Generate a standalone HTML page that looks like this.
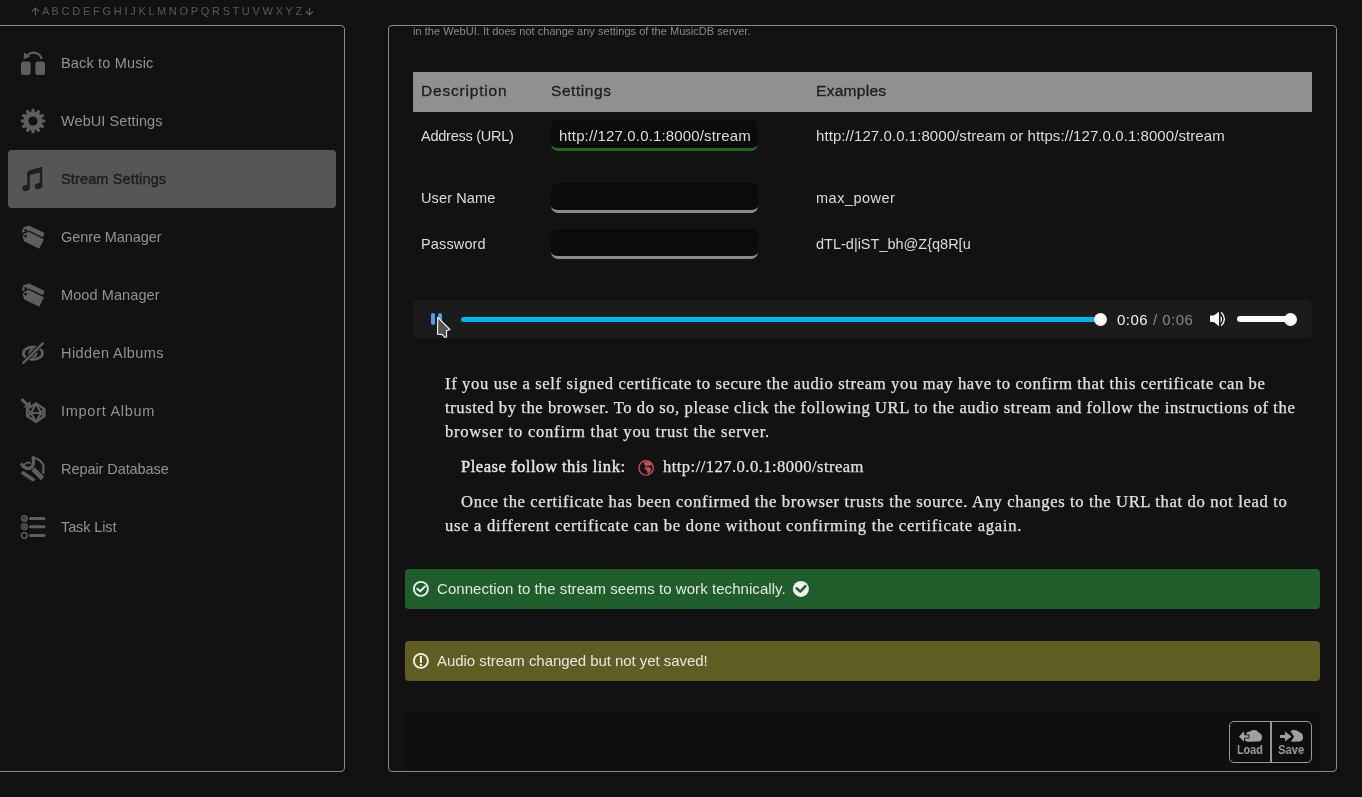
<!DOCTYPE html>
<html><head><meta charset="utf-8">
<style>
*{margin:0;padding:0;box-sizing:border-box}
html,body{width:1362px;height:797px;overflow:hidden;background:#121212;font-family:"Liberation Sans",sans-serif}
.abs{position:absolute}
.t{position:absolute;white-space:nowrap;line-height:1;will-change:transform}
#alpha{font-size:11px;color:#5a5a5a}
#side{left:-10px;top:25px;width:355px;height:747px;border:1px solid #8a8a8a;border-radius:4px}
.mi{position:absolute;left:60.8px;font-size:14.5px;color:#929292}
#sel{left:8px;top:150px;width:328px;height:58px;background:#565656;border-radius:4px}
.ic{position:absolute;fill:#606060}
#main{left:388px;top:25px;width:949px;height:747px;border:1px solid #8a8a8a;border-radius:4px}
#thead{left:413px;top:72px;width:899px;height:40px;background:#909090}
.th{position:absolute;font-size:15.5px;color:#1c1c1c;letter-spacing:0.8px;-webkit-text-stroke:0.3px #1c1c1c}
.td{position:absolute;font-size:14.5px;color:#dcdcdc}
.inp{position:absolute;left:551px;width:207px;height:30px;background:#0b0b0b;border-radius:7px;border-bottom:3px solid #8a8a8a}
#player{left:413px;top:300px;width:899px;height:38px;background:#1b1b1b;border-radius:5px}
.ser{position:absolute;font-family:"Liberation Serif",serif;font-size:16.6px;color:#e2e2e2;letter-spacing:0.55px;-webkit-text-stroke:0.25px #e2e2e2}
.msg{position:absolute;left:405px;width:915px;height:40px;border-radius:4px}
.mt{position:absolute;left:437px;font-size:15px;color:#e6e6e6}
</style></head><body>
<div class="t" id="alpha" style="left:42px;top:6px;letter-spacing:-0.16px">A B C D E F G H I J K L M N O P Q R S T U V W X Y Z</div>
<svg class="abs" style="left:31px;top:7px" width="9" height="9" viewBox="0 0 9 9"><path d="M4.5 8.5 L4.5 1 M1 4.5 L4.5 1 L8 4.5" fill="none" stroke="#5a5a5a" stroke-width="1.2"/></svg>
<svg class="abs" style="left:305px;top:7px" width="9" height="9" viewBox="0 0 9 9"><path d="M4.5 0.5 L4.5 8 M1 4.5 L4.5 8 L8 4.5" fill="none" stroke="#5a5a5a" stroke-width="1.2"/></svg>

<div class="abs" id="side"></div>
<div class="abs" id="sel"></div>


<!-- icons -->
<svg class="abs" style="left:20px;top:49px" width="27" height="28" viewBox="0 0 27 28">
 <rect x="1" y="12.5" width="9.6" height="13.5" rx="2.5" fill="#5e5e5e"/>
 <rect x="15.4" y="12.5" width="9.6" height="13.5" rx="2.5" fill="#5e5e5e"/>
 <path d="M21.6 10 A8.2 7.6 0 0 0 7.5 6.2" fill="none" stroke="#5e5e5e" stroke-width="2.2"/>
 <path d="M3.9 3.2 L3.7 10.3 L10 7.4 Z" fill="#5e5e5e"/>
</svg>
<svg class="abs" style="left:20px;top:108px" width="26" height="26" viewBox="-13 -13 26 26">
 <g fill="#5e5e5e">
 <circle r="9.6"/>
 <rect x="-1.6" y="-12.2" width="3.2" height="4" rx="0.8" transform="rotate(0)"/><rect x="-1.6" y="-12.2" width="3.2" height="4" rx="0.8" transform="rotate(30)"/><rect x="-1.6" y="-12.2" width="3.2" height="4" rx="0.8" transform="rotate(60)"/><rect x="-1.6" y="-12.2" width="3.2" height="4" rx="0.8" transform="rotate(90)"/><rect x="-1.6" y="-12.2" width="3.2" height="4" rx="0.8" transform="rotate(120)"/><rect x="-1.6" y="-12.2" width="3.2" height="4" rx="0.8" transform="rotate(150)"/><rect x="-1.6" y="-12.2" width="3.2" height="4" rx="0.8" transform="rotate(180)"/><rect x="-1.6" y="-12.2" width="3.2" height="4" rx="0.8" transform="rotate(210)"/><rect x="-1.6" y="-12.2" width="3.2" height="4" rx="0.8" transform="rotate(240)"/><rect x="-1.6" y="-12.2" width="3.2" height="4" rx="0.8" transform="rotate(270)"/><rect x="-1.6" y="-12.2" width="3.2" height="4" rx="0.8" transform="rotate(300)"/><rect x="-1.6" y="-12.2" width="3.2" height="4" rx="0.8" transform="rotate(330)"/>
 </g>
 <circle r="4.6" fill="#121212"/>
</svg>
<svg class="abs" style="left:21px;top:167px" width="22" height="25" viewBox="0 0 22 25">
 <path d="M7.5 5 L20 1.5 L20 19" fill="none" stroke="#1e1e1e" stroke-width="2.6"/>
 <path d="M7.5 5 L20 1.5 L20 5 L7.5 8.5 Z" fill="#1e1e1e"/>
 <path d="M7.5 5 L7.5 20.5" fill="none" stroke="#1e1e1e" stroke-width="2.6"/>
 <ellipse cx="5" cy="21" rx="3.8" ry="3" transform="rotate(-20 5 21)" fill="#1e1e1e"/>
 <ellipse cx="17.5" cy="19" rx="3.8" ry="3" transform="rotate(-20 17.5 19)" fill="#1e1e1e"/>
</svg>
<svg class="abs" style="left:20px;top:224px" width="27" height="27" viewBox="0 0 27 27">
 <g transform="translate(5.4 -0.2999999999999998) rotate(26) scale(1.08)">
  <path d="M0 3.6 L3.6 0 L18.8 0 Q20 0 20 1.2 L20 9.8 Q20 11 18.8 11 L3.6 11 L0 7.4 Z" fill="#5e5e5e" />
  <circle cx="2.9" cy="5.5" r="1.25" fill="#121212"/>
 </g>
 <g transform="translate(5.4 5.5) rotate(26) scale(1.08)">
  <path d="M0 3.6 L3.6 0 L18.8 0 Q20 0 20 1.2 L20 9.8 Q20 11 18.8 11 L3.6 11 L0 7.4 Z" fill="#5e5e5e" stroke="#121212" stroke-width="1.3"/>
  <circle cx="2.9" cy="5.5" r="1.25" fill="#121212"/>
 </g>
</svg>
<svg class="abs" style="left:20px;top:282px" width="27" height="27" viewBox="0 0 27 27">
 <g transform="translate(5.4 -0.2999999999999998) rotate(26) scale(1.08)">
  <path d="M0 3.6 L3.6 0 L18.8 0 Q20 0 20 1.2 L20 9.8 Q20 11 18.8 11 L3.6 11 L0 7.4 Z" fill="#5e5e5e" />
  <circle cx="2.9" cy="5.5" r="1.25" fill="#121212"/>
 </g>
 <g transform="translate(5.4 5.5) rotate(26) scale(1.08)">
  <path d="M0 3.6 L3.6 0 L18.8 0 Q20 0 20 1.2 L20 9.8 Q20 11 18.8 11 L3.6 11 L0 7.4 Z" fill="#5e5e5e" stroke="#121212" stroke-width="1.3"/>
  <circle cx="2.9" cy="5.5" r="1.25" fill="#121212"/>
 </g>
</svg>
<svg class="abs" style="left:20px;top:340px" width="26" height="26" viewBox="0 0 26 26">
 <ellipse cx="12.9" cy="13.2" rx="9.6" ry="6.2" fill="none" stroke="#5e5e5e" stroke-width="2.8"/>
 <circle cx="12.9" cy="13.2" r="4.6" fill="#5e5e5e"/>
 <path d="M3.5 22.5 L22.5 3.5" stroke="#121212" stroke-width="4.4"/>
 <path d="M3.3 22.8 L22.8 3.3" stroke="#5e5e5e" stroke-width="2.4" stroke-linecap="round"/>
</svg>
<svg class="abs" style="left:20px;top:397px" width="27" height="27" viewBox="0 0 27 27">
 <path d="M1.5 2 L7.5 8" stroke="#5e5e5e" stroke-width="3"/>
 <path d="M3.5 10.5 L10.5 10.5 L10.5 3.5 Z" fill="#5e5e5e"/>
 <g fill="none" stroke="#5e5e5e" stroke-width="2.2" stroke-linejoin="round">
  <path d="M16 6.5 L24.5 12 L24.5 19 L16 25 L7 19 L7 12 Z"/>
  <path d="M16 6.5 L11 16 L21 16 Z"/>
  <path d="M7 12 L11 16 L7 19 M24.5 12 L21 16 L24.5 19 M11 16 L16 25 L21 16"/>
 </g>
</svg>
<svg class="abs" style="left:18px;top:453px" width="30" height="32" viewBox="0 0 30 32">
 <g fill="none" stroke="#5e5e5e">
  <path d="M15.5 4.5 Q22.5 6 25.5 12.5 L25.2 20" stroke-width="2.2" stroke-linecap="round"/>
  <path d="M5 20 L15 26.5" stroke-width="3.6" stroke-linecap="round"/>
  <path d="M15 16 L24.5 25.5" stroke-width="4.6"/>
  <path d="M3.8 11.5 Q8 17.5 13.5 14.5 Q16.5 11 15 4.5" stroke-width="3.2" stroke-linecap="round"/>
  <path d="M7 11 Q10 8.5 12 10" stroke-width="2" stroke-linecap="round"/>
 </g>
</svg>
<svg class="abs" style="left:20px;top:514px" width="27" height="27" viewBox="0 0 27 27">
 <g fill="none" stroke="#5e5e5e" stroke-width="1.4">
  <circle cx="4.3" cy="4.5" r="2.8"/><circle cx="4.3" cy="12.7" r="2.8"/><circle cx="4.3" cy="21.5" r="2.8"/>
  <path d="M3 4.5 L4 5.5 L5.8 3.5"/><path d="M3.2 11.6 L5.4 13.8 M5.4 11.6 L3.2 13.8"/>
 </g>
 <g stroke="#5e5e5e" stroke-width="3" stroke-linecap="round">
  <path d="M10.5 4.5 L24 4.5"/><path d="M10.5 12.7 L24 12.7"/><path d="M10.5 21.5 L24 21.5"/>
 </g>
</svg>
<!-- menu text: baselines 67.6, +58 -->
<div class="t mi" style="top:56px;letter-spacing:0.17px">Back to Music</div>
<div class="t mi" style="top:114px;letter-spacing:0.08px">WebUI Settings</div>
<div class="t mi" style="top:172px;color:#1c1c1c;letter-spacing:0.14px;-webkit-text-stroke:0.35px #1c1c1c">Stream Settings</div>
<div class="t mi" style="top:230px;letter-spacing:-0.08px">Genre Manager</div>
<div class="t mi" style="top:288px;letter-spacing:0.09px">Mood Manager</div>
<div class="t mi" style="top:346px;letter-spacing:0.42px">Hidden Albums</div>
<div class="t mi" style="top:404px;letter-spacing:0.73px">Import Album</div>
<div class="t mi" style="top:462px;letter-spacing:-0.07px">Repair Database</div>
<div class="t mi" style="top:520px;letter-spacing:-0.12px">Task List</div>

<div class="abs" id="main"></div>
<div class="t" style="left:413px;top:26px;font-size:11px;letter-spacing:0.03px;color:#8a8a8a">in the WebUI. It does not change any settings of the MusicDB server.</div>

<div class="abs" id="thead"></div>
<div class="t th" style="left:421px;top:83px;letter-spacing:0.8px">Description</div>
<div class="t th" style="left:551px;top:83px;letter-spacing:0.57px">Settings</div>
<div class="t th" style="left:816px;top:83px;letter-spacing:0.29px">Examples</div>

<div class="t td" style="left:421px;top:129px;letter-spacing:-0.25px">Address (URL)</div>
<div class="inp" style="top:120px;height:31px;border-bottom-color:#1d6a20"></div>
<div class="t td" style="left:559px;top:128px;font-size:15px;letter-spacing:0.15px">http://127.0.0.1:8000/stream</div>
<div class="t td" style="left:816px;top:128px;font-size:15px;letter-spacing:0.07px">http://127.0.0.1:8000/stream or https://127.0.0.1:8000/stream</div>

<div class="t td" style="left:421px;top:191px;letter-spacing:0.12px">User Name</div>
<div class="inp" style="top:183px"></div>
<div class="t td" style="left:816px;top:191px;letter-spacing:0.5px">max_power</div>

<div class="t td" style="left:421px;top:237px;letter-spacing:0.14px">Password</div>
<div class="inp" style="top:229px"></div>
<div class="t td" style="left:816px;top:237px">dTL-d|iST_bh@Z{q8R[u</div>

<div class="abs" id="player"></div>
<div class="abs" style="left:431px;top:313px;width:4px;height:12px;background:#4a9ff5;border-radius:2px"></div>
<div class="abs" style="left:438px;top:313px;width:4px;height:12px;background:#4a9ff5;border-radius:2px"></div>
<div class="abs" style="left:461px;top:317px;width:640px;height:5px;background:#00b4f0;border-radius:3px"></div>
<div class="abs" style="left:1094px;top:313px;width:13px;height:13px;background:#fafafa;border-radius:50%"></div>
<div class="t" style="left:1117px;top:312px;font-size:15px;letter-spacing:0.5px;color:#f0f0f0">0:06 <span style="color:#8a8a8a">/ 0:06</span></div>
<div class="abs" style="left:1237px;top:316px;width:55px;height:6px;background:#fafafa;border-radius:3px"></div>
<div class="abs" style="left:1284px;top:313px;width:13px;height:13px;background:#fafafa;border-radius:50%"></div>

<div class="t ser" style="left:445px;top:376px;letter-spacing:0.635px">If you use a self signed certificate to secure the audio stream you may have to confirm that this certificate can be</div>
<div class="t ser" style="left:445px;top:400px;letter-spacing:0.568px">trusted by the browser. To do so, please click the following URL to the audio stream and follow the instructions of the</div>
<div class="t ser" style="left:445px;top:424px;letter-spacing:0.75px">browser to confirm that you trust the server.</div>
<div class="t ser" style="left:461px;top:459px;letter-spacing:0.5px;-webkit-text-stroke:0.45px #e6e6e6">Please follow this link:</div>
<div class="t ser" style="left:663px;top:459px;letter-spacing:0.444px">http://127.0.0.1:8000/stream</div>
<div class="t ser" style="left:461px;top:494px;letter-spacing:0.643px">Once the certificate has been confirmed the browser trusts the source. Any changes to the URL that do not lead to</div>
<div class="t ser" style="left:445px;top:518px;letter-spacing:0.7px">use a different certificate can be done without confirming the certificate again.</div>

<div class="msg" style="top:569px;background:#1f5e2a"></div>
<div class="t mt" style="top:581px;letter-spacing:0.06px">Connection to the stream seems to work technically.</div>
<div class="msg" style="top:641px;background:#5f5d21"></div>
<div class="t mt" style="top:653px;letter-spacing:-0.05px">Audio stream changed but not yet saved!</div>

<div class="abs" style="left:405px;top:712px;width:915px;height:59px;background:#0f0f0f"></div>
<div class="abs" style="left:1229px;top:721px;width:83px;height:42px;border:1.5px solid #999;border-radius:5px;background:#0e0e0e"></div>
<div class="abs" style="left:1270px;top:721px;width:1.5px;height:42px;background:#999"></div>
<div class="t" style="left:1237px;top:742.5px;font-size:13.5px;font-weight:bold;color:#9c9c9c;transform:scaleX(0.8);transform-origin:0 0">Load</div>
<div class="t" style="left:1278px;top:742.5px;font-size:13.5px;font-weight:bold;color:#9c9c9c;transform:scaleX(0.83);transform-origin:0 0">Save</div>

<!-- msg icons -->
<svg class="abs" style="left:412px;top:580px" width="18" height="18" viewBox="0 0 18 18">
 <circle cx="8.9" cy="8.9" r="7" fill="none" stroke="#f0f0f0" stroke-width="1.9"/>
 <path d="M5.3 8.7 L8.2 11.3 L12.8 6.6" fill="none" stroke="#f0f0f0" stroke-width="2" stroke-linecap="round" stroke-linejoin="round"/>
</svg>
<svg class="abs" style="left:792px;top:580px" width="18" height="18" viewBox="0 0 18 18">
 <circle cx="8.9" cy="8.9" r="8" fill="#f0f0f0"/>
 <path d="M4.6 8.3 L8.3 11.6 L13.4 6.2" fill="none" stroke="#1f5e2a" stroke-width="2.5" stroke-linecap="round" stroke-linejoin="round"/>
</svg>
<svg class="abs" style="left:412px;top:652px" width="18" height="18" viewBox="0 0 18 18">
 <circle cx="8.9" cy="8.9" r="7" fill="none" stroke="#f0f0f0" stroke-width="1.9"/>
 <rect x="7.9" y="4" width="2" height="7" fill="#f0f0f0"/>
 <rect x="7.9" y="12" width="2" height="2" fill="#f0f0f0"/>
</svg>
<!-- globe -->
<svg class="abs" style="left:637px;top:459px" width="18" height="18" viewBox="0 0 18 18">
 <circle cx="9.1" cy="8.9" r="7.2" fill="none" stroke="#c24d57" stroke-width="1.4"/>
 <path d="M6.8 3.4 Q10 2 13.8 3.6 L14.4 6.2 Q12.8 7.2 11.2 6.6 L9.6 7.6 Q7.4 7 6.8 3.4 Z" fill="#c24d57"/>
 <path d="M7.2 8.6 Q10 7.6 12.8 8.2 Q15 9.6 13.8 11.6 Q12.3 13.6 11.2 15.2 Q9.8 13.2 10 11.6 Q7.8 11 7.2 8.6 Z" fill="#c24d57"/>
</svg>
<!-- volume -->
<svg class="abs" style="left:1209px;top:311px" width="18" height="16" viewBox="0 0 18 16">
 <path d="M1 5.2 Q1 4.5 1.8 4.5 L4.8 4.5 L10 0.8 L10 15.2 L4.8 11 L1.8 11 Q1 11 1 10.3 Z" fill="#fafafa"/>
 <path d="M11.6 4.5 Q14.6 8 11.6 12 Z" fill="#fafafa"/>
 <path d="M12.2 1.2 Q18.6 8 12.2 14.8" fill="none" stroke="#fafafa" stroke-width="1.3"/>
</svg>
<!-- cursor -->
<svg class="abs" style="left:436px;top:316px" width="16" height="23" viewBox="0 0 16 23">
 <path d="M1.7 1.3 L13.9 13.5 L10.5 14.8 L10.6 21 L9 21.4 L5.8 18.4 L1.5 18.2 Z" fill="#555" stroke="#f4f4f4" stroke-width="1.1" stroke-linejoin="round"/>
</svg>
<!-- clouds -->
<svg class="abs" style="left:1238px;top:729px" width="25" height="14" viewBox="0 0 25 14">
 <g fill="#a0a0a0">
 <path d="M8 5 Q9 2 12 2.5 Q14 0.3 17.5 1.3 Q19.5 1.3 20.5 3.5 Q24 4.5 24 8 Q24 12.5 20 12.5 L10 12.8 Q6.5 12.5 7 9.5 Z"/>
 <path d="M1 7.5 L5.8 2.3 L6.3 5.8 L11 5.8 L11 9.2 L6.3 9.2 L5.8 12.8 Z"/>
 </g>
 <path d="M6.3 5.8 L11 5.8 L11 9.2 L6.3 9.2" fill="none" stroke="#0e0e0e" stroke-width="0.9"/>
</svg>
<svg class="abs" style="left:1279px;top:729px" width="25" height="14" viewBox="0 0 25 14">
 <g fill="#a0a0a0">
 <path d="M11 3 Q12.5 0.5 16 1.3 Q18.5 0.8 20 3 Q24 4 24 8 Q24 12.5 20 12.5 L12 12.8 L15 7.5 Z"/>
 <path d="M1 6 L6 6 L6 2.5 L12.5 7.5 L6 12.5 L6 9 L1 9 Z"/>
 </g>
 <path d="M10.5 1.5 L14.5 7.5 L10.5 13.5" fill="none" stroke="#0e0e0e" stroke-width="1"/>
</svg>
</body></html>
